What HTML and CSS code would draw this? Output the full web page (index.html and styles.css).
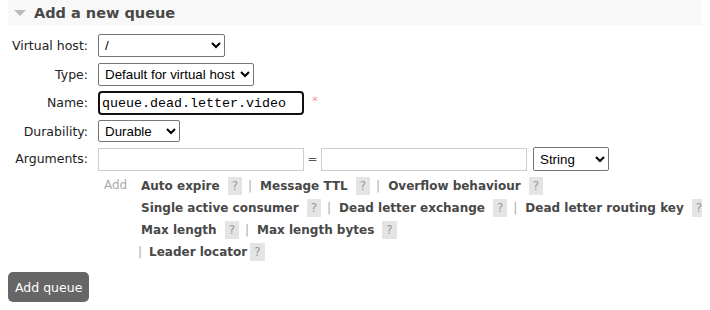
FILE: index.html
```html
<!DOCTYPE html>
<html lang="en">
<head>
    <meta charset="UTF-8">
    <title>Add a new queue</title>
    <link rel="stylesheet" href="styles.css">
</head>
<body>
    <div class="section">
        <h2 class="section-header"><span class="arrow"></span>Add a new queue</h2>

        <form class="queue-form">
            <div class="form-row first">
                <label class="form-label">Virtual host:</label>
                <select class="vhost">
                    <option>/</option>
                </select>
            </div>
            <div class="form-row">
                <label class="form-label">Type:</label>
                <select class="type">
                    <option>Default for virtual host</option>
                </select>
            </div>
            <div class="form-row">
                <label class="form-label">Name:</label>
                <input type="text" class="name-input" value="queue.dead.letter.video">
                <span class="mand">*</span>
            </div>
            <div class="form-row">
                <label class="form-label">Durability:</label>
                <select class="durability">
                    <option>Durable</option>
                </select>
            </div>
            <div class="form-row">
                <label class="form-label">Arguments:</label>
                <div class="args">
                    <div class="arg-inputs">
                        <input type="text" class="arg-input">
                        <span class="equals">=</span>
                        <input type="text" class="arg-input">
                        <select class="arg-type">
                            <option>String</option>
                        </select>
                    </div>
                    <div class="arg-help">
                        <span class="add-link">Add</span>
                        <div class="help-lines">
                            <div class="help-line">
                                <span class="arg-name">Auto expire</span><span class="help">?</span><span class="sep">|</span>
                                <span class="arg-name">Message TTL</span><span class="help">?</span><span class="sep">|</span>
                                <span class="arg-name">Overflow behaviour</span><span class="help">?</span>
                            </div>
                            <div class="help-line">
                                <span class="arg-name">Single active consumer</span><span class="help">?</span><span class="sep">|</span>
                                <span class="arg-name">Dead letter exchange</span><span class="help">?</span><span class="sep">|</span>
                                <span class="arg-name">Dead letter routing key</span><span class="help">?</span>
                            </div>
                            <div class="help-line">
                                <span class="arg-name">Max length</span><span class="help">?</span><span class="sep">|</span>
                                <span class="arg-name">Max length bytes</span><span class="help">?</span>
                            </div>
                            <div class="help-line shifted">
                                <span class="sep">|</span>
                                <span class="arg-name">Leader locator</span><span class="help tight">?</span>
                            </div>
                        </div>
                    </div>
                </div>
            </div>

            <button type="button" class="add-btn">Add queue</button>
        </form>
    </div>
</body>
</html>
```

FILE: styles.css
```css
* {
    box-sizing: border-box;
    margin: 0;
    padding: 0;
}

body {
    font-family: 'DejaVu Sans', Verdana, sans-serif;
    font-size: 12px;
    color: #484848;
    background: white;
    margin: 0 8px;
}

.section-header {
    display: flex;
    align-items: center;
    height: 25px;
    background: #f8f8f8;
    font-size: 14.5px;
    font-weight: bold;
    color: #484848;
    padding-left: 6px;
}

.arrow {
    width: 0;
    height: 0;
    border-left: 6px solid transparent;
    border-right: 6px solid transparent;
    border-top: 6px solid #bbb;
    margin-right: 8px;
    margin-top: 1px;
}

.queue-form {
    padding-top: 9px;
}

.form-row {
    display: flex;
    align-items: flex-start;
    margin-bottom: 5px;
}

.form-row.first {
    margin-bottom: 6px;
}

.form-label {
    width: 90px;
    flex-shrink: 0;
    text-align: right;
    padding-right: 10px;
    padding-top: 4px;
    color: #222;
    font-size: 12.5px;
    white-space: nowrap;
}

select, input {
    font-family: 'Liberation Sans', Arial, sans-serif;
    font-size: 13.33px;
    color: #000;
}

select {
    height: 23px;
    border: 1px solid #767676;
    border-radius: 2px;
    background: white;
    padding: 0 2px;
}

.vhost {
    width: 127px;
}

.type {
    width: 156px;
}

.durability {
    width: 82px;
    height: 22px;
}

input[type="text"] {
    height: 23px;
    border: 1px solid #ccc;
    padding: 1px 2px;
}

input.name-input {
    width: 206px;
    height: 24px;
    font-family: 'Liberation Mono', 'Courier New', monospace;
    font-size: 13.33px;
    border: 2px solid #111;
    border-radius: 4px;
    outline: none;
    padding: 1px 2px;
}

.mand {
    color: #f0a0a0;
    font-size: 12px;
    margin-left: 8px;
    margin-top: 3px;
}

.args {
    display: flex;
    flex-direction: column;
}

.arg-inputs {
    display: flex;
    align-items: center;
}

.arg-input {
    width: 206px;
}

.equals {
    width: 17px;
    text-align: center;
    color: #555;
}

.arg-type {
    width: 76px;
    height: 24px;
    margin-left: 6px;
}

.arg-help {
    display: flex;
    margin-top: 5px;
}

.add-link {
    color: #aaa;
    padding-left: 6px;
    width: 43px;
    flex-shrink: 0;
    padding-top: 2px;
}

.help-lines {
    display: flex;
    flex-direction: column;
    gap: 2px;
    flex-shrink: 0;
}

.help-line {
    display: flex;
    align-items: center;
    height: 20px;
    white-space: nowrap;
}

.help-line.shifted {
    margin-left: -9px;
}

.help-line.shifted .sep {
    margin-right: 7px;
}

.arg-name {
    font-weight: bold;
    color: #484848;
    font-size: 12px;
    flex-shrink: 0;
}

.help {
    display: inline-block;
    background: #e4e4e4;
    color: #999;
    font-size: 12px;
    padding: 2px 4px;
    margin-left: 8px;
    line-height: 14px;
    flex-shrink: 0;
}

.help.tight {
    margin-left: 3px;
}

.sep {
    color: #aaa;
    margin: 0 8px 0 6px;
}

.add-btn {
    margin-top: 5px;
    background: #666;
    color: white;
    border: none;
    border-radius: 5px;
    font-family: 'DejaVu Sans', Verdana, sans-serif;
    font-size: 12.5px;
    padding: 0 7px;
    height: 30px;
    white-space: nowrap;
    cursor: pointer;
}
```
